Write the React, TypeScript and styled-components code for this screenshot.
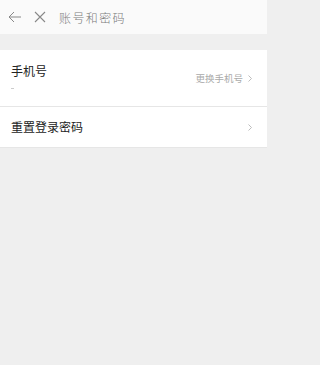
import React from "react";
import styled, { createGlobalStyle } from "styled-components";

const Global = createGlobalStyle`
  html, body { margin: 0; padding: 0; background: #efefef; }
  body { font-family: "Noto Sans CJK SC", "Noto Sans", sans-serif; }
`;

const Page = styled.div`
  width: 267px;
  min-height: 365px;
  display: flex;
  flex-direction: column;
  background: #efefef;
`;

const Header = styled.div`
  height: 34px;
  background: #fafafa;
  display: flex;
  align-items: center;
  padding-left: 8px;
  box-sizing: border-box;
`;

const IconBtn = styled.div<{ gap: number }>`
  width: 14px;
  height: 14px;
  display: flex;
  align-items: center;
  justify-content: center;
  margin-right: ${(p) => p.gap}px;
`;

const Title = styled.div`
  font-size: 12px;
  color: #7a7a7a;
  letter-spacing: 1.4px;
  font-weight: 300;
`;

const Band = styled.div`
  height: 16px;
  background: #efefef;
`;

const Row = styled.div<{ h: number }>`
  height: ${(p) => p.h}px;
  background: #fff;
  border-bottom: 1px solid #e6e6e6;
  display: flex;
  justify-content: space-between;
  padding: 0 15px 0 11px;
  box-sizing: border-box;
`;

const Left = styled.div<{ top: number }>`
  display: flex;
  flex-direction: column;
  padding-top: ${(p) => p.top}px;
`;

const Label = styled.div`
  font-size: 12px;
  line-height: 14px;
  color: #222;
`;

const Dash = styled.div`
  width: 3px;
  height: 1px;
  background: #ccc;
  margin-top: 10px;
`;

const Right = styled.div`
  display: flex;
  align-items: center;
  gap: 5px;
`;

const Hint = styled.span`
  font-size: 9.5px;
  color: #aaa;
`;

const Chevron = () => (
  <svg width="4" height="7" viewBox="0 0 4 7">
    <path d="M0.5 0.5 L3.5 3.5 L0.5 6.5" stroke="#b5b5b5" strokeWidth="0.9" fill="none" />
  </svg>
);

export default function App() {
  return (
    <>
      <Global />
      <Page>
        <Header>
          <IconBtn gap={11}>
            <svg width="14" height="12" viewBox="0 0 14 12">
              <path d="M13 6 H1 M6 1 L1 6 L6 11" stroke="#888" strokeWidth="1" fill="none" />
            </svg>
          </IconBtn>
          <IconBtn gap={12}>
            <svg width="12" height="12" viewBox="0 0 12 12">
              <path d="M1 1 L11 11 M11 1 L1 11" stroke="#888" strokeWidth="1.1" fill="none" />
            </svg>
          </IconBtn>
          <Title>账号和密码</Title>
        </Header>
        <Band />
        <Row h={57}>
          <Left top={14}>
            <Label>手机号</Label>
            <Dash />
          </Left>
          <Right>
            <Hint>更换手机号</Hint>
            <Chevron />
          </Right>
        </Row>
        <Row h={41}>
          <Right>
            <Label>重置登录密码</Label>
          </Right>
          <Right>
            <Chevron />
          </Right>
        </Row>
      </Page>
    </>
  );
}
